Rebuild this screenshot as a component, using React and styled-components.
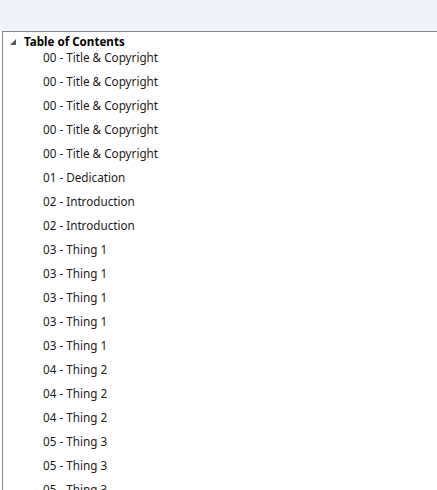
import React from 'react';
import styled, { createGlobalStyle } from 'styled-components';

const GlobalStyle = createGlobalStyle`
  html, body {
    margin: 0;
    padding: 0;
    background: #ffffff;
    overflow: hidden;
  }
  body {
    font-family: "Noto Sans", "Open Sans", sans-serif;
  }
`;

const Page = styled.div`
  width: 437px;
  height: 490px;
  display: flex;
  flex-direction: column;
  overflow: hidden;
`;

const TopBar = styled.div`
  height: 31px;
  flex: none;
  background: #f0f3fa;
`;

const TreePanel = styled.div`
  flex: 1;
  margin-left: 2px;
  border-top: 1px solid #828790;
  border-left: 1px solid #828790;
  background: #ffffff;
  overflow: hidden;
`;

/* header is shorter than its label; the label hangs into the first row */
const HeaderRow = styled.div`
  display: flex;
  align-items: flex-start;
  height: 13px;
  color: #000;
`;

const Arrow = styled.span`
  width: 21px;
  flex: none;
  display: flex;
  justify-content: flex-end;
  padding-top: 7px;
  svg { display: block; margin-right: 8px; }
`;

const HeaderLabel = styled.span`
  font-size: 11.6px;
  font-weight: 700;
  line-height: 14px;
  padding-top: 3px;
`;

const Item = styled.div`
  height: 24px;
  line-height: 24px;
  padding-left: 40px;
  font-size: 11.7px;
  color: #1a1a1a;
  white-space: nowrap;
`;

const items = [
  '00 - Title & Copyright',
  '00 - Title & Copyright',
  '00 - Title & Copyright',
  '00 - Title & Copyright',
  '00 - Title & Copyright',
  '01 - Dedication',
  '02 - Introduction',
  '02 - Introduction',
  '03 - Thing 1',
  '03 - Thing 1',
  '03 - Thing 1',
  '03 - Thing 1',
  '03 - Thing 1',
  '04 - Thing 2',
  '04 - Thing 2',
  '04 - Thing 2',
  '05 - Thing 3',
  '05 - Thing 3',
  '05 - Thing 3',
];

export default function App() {
  return (
    <Page>
      <GlobalStyle />
      <TopBar />
      <TreePanel>
        <HeaderRow>
          <Arrow>
            <svg width="6" height="6" viewBox="0 0 6 6">
              <polygon points="6,0 6,6 0,6" fill="#595959" />
            </svg>
          </Arrow>
          <HeaderLabel>Table of Contents</HeaderLabel>
        </HeaderRow>
        {items.map((label, i) => (
          <Item key={i}>{label}</Item>
        ))}
      </TreePanel>
    </Page>
  );
}
